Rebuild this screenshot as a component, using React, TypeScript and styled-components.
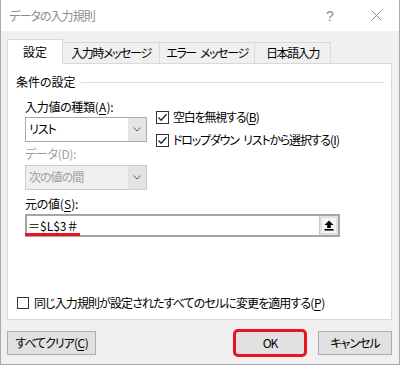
import styled, { createGlobalStyle } from 'styled-components';

const GlobalStyle = createGlobalStyle`
  html, body { margin: 0; padding: 0; background: #ffffff; }
  body {
    font-family: 'Noto Sans CJK JP', 'Noto Sans', sans-serif;
    font-size: 12px;
    font-feature-settings: 'palt';
    letter-spacing: -1px;
    word-spacing: 3px;
    color: #000;
  }
  * { box-sizing: border-box; }
`;

const Window = styled.div`
  width: 400px;
  height: 365px;
  border: 1px solid #a9a9a9;
  border-top: none;
  display: flex;
  flex-direction: column;
  background: #f0f0f0;
`;

const TitleBar = styled.div`
  height: 31px;
  background: #ffffff;
  display: flex;
  align-items: center;
  padding-left: 8px;
  color: #8c8c8c;
  line-height: 16px;
`;

const Title = styled.span`
  flex: 1;
  letter-spacing: -0.9px;
`;

const TitleIcon = styled.span`
  width: 46px;
  display: flex;
  justify-content: center;
  color: #8c8c8c;
  font-family: 'Liberation Sans', sans-serif;
  font-size: 14px;
  letter-spacing: 0;
`;

const Body = styled.div`
  flex: 1;
  padding: 8px 7px 0 6px;
  display: flex;
  flex-direction: column;
`;

const TabBar = styled.div`
  display: flex;
  align-items: flex-end;
  height: 24px;
`;

const Tab = styled.div<{ $w: number; $active?: boolean }>`
  width: ${(p) => p.$w}px;
  height: ${(p) => (p.$active ? 25 : 21)}px;
  margin-bottom: ${(p) => (p.$active ? -1 : 0)}px;
  margin-left: -1px;
  &:first-child { margin-left: 0; }
  border: 1px solid #d9d9d9;
  border-bottom: none;
  background: ${(p) => (p.$active ? '#ffffff' : '#f0f0f0')};
  position: relative;
  z-index: ${(p) => (p.$active ? 1 : 0)};
  display: flex;
  justify-content: center;
  align-items: ${(p) => (p.$active ? 'flex-start' : 'center')};
  padding-top: ${(p) => (p.$active ? 4 : 0)}px;
  line-height: 16px;
  letter-spacing: ${(p) => (p.$active ? 0 : -1.4)}px;
  white-space: nowrap;
`;

const Panel = styled.div`
  height: 257px;
  background: #ffffff;
  border: 1px solid #d9d9d9;
  padding: 10px 6px 8px 8px;
  display: flex;
  flex-direction: column;
`;

const GroupHeader = styled.div`
  display: flex;
  align-items: center;
  gap: 5px;
  height: 16px;
  line-height: 16px;
  letter-spacing: 0;
`;

const Rule = styled.div`
  flex: 1;
  height: 1px;
  background: #dcdcdc;
`;

const GroupBody = styled.div`
  padding-left: 9px;
  display: flex;
  flex-direction: column;
`;

const Columns = styled.div`
  display: flex;
  gap: 9px;
`;

const LeftCol = styled.div`
  width: 122px;
  display: flex;
  flex-direction: column;
`;

const RightCol = styled.div`
  padding-top: 19px;
  display: flex;
  flex-direction: column;
  gap: 7px;
`;

const Label = styled.div<{ $top: number; $disabled?: boolean }>`
  margin-top: ${(p) => p.$top}px;
  height: 16px;
  line-height: 16px;
  letter-spacing: -0.3px;
  color: ${(p) => (p.$disabled ? '#a0a0a0' : '#000')};
  white-space: nowrap;
`;

const Key = styled.span`
  text-decoration: underline;
  text-underline-offset: 2px;
  padding: 0 0.5px;
`;

const Select = styled.div<{ $top: number; $disabled?: boolean }>`
  margin-top: ${(p) => p.$top}px;
  height: 25px;
  display: flex;
  border: 1px solid ${(p) => (p.$disabled ? '#cccccc' : '#acacac')};
  background: ${(p) => (p.$disabled ? '#efefef' : '#ffffff')};
  color: ${(p) => (p.$disabled ? '#a0a0a0' : '#000')};
`;

const SelectValue = styled.div`
  flex: 1;
  padding-left: 3px;
  line-height: 22px;
`;

const DropButton = styled.div<{ $disabled?: boolean }>`
  width: 18px;
  background: ${(p) => (p.$disabled ? '#e3e3e3' : '#e5e5e5')};
  display: flex;
  align-items: center;
  justify-content: center;
`;

const CheckRow = styled.label`
  display: flex;
  align-items: center;
  gap: 4px;
  height: 16px;
  line-height: 16px;
  letter-spacing: -1.2px;
  white-space: nowrap;
`;

const Box = styled.div<{ $size: number }>`
  width: ${(p) => p.$size}px;
  height: ${(p) => p.$size}px;
  border: 1px solid #333333;
  background: #ffffff;
  display: flex;
  align-items: center;
  justify-content: center;
  flex-shrink: 0;
`;

const RefInput = styled.div`
  margin-top: 2px;
  width: 315px;
  height: 23px;
  border: 2px solid #a5a5a5;
  display: flex;
  background: #ffffff;
`;

const RefValue = styled.div`
  flex: 1;
  line-height: 19px;
  letter-spacing: 0;
  font-feature-settings: normal;
`;

const Marked = styled.span`
  position: relative;
  display: inline-block;
  padding-left: 1px;
  &::after {
    content: '';
    position: absolute;
    left: -2px;
    right: -1px;
    bottom: -1px;
    height: 3px;
    background: #e8141c;
  }
`;

const RefButton = styled.div`
  width: 19px;
  background: #e1e1e1;
  border-left: 1px solid #c8c8c8;
  padding: 2px;
  display: flex;
`;

const RefButtonFace = styled.div`
  flex: 1;
  background: #f5f5f5;
  display: flex;
  align-items: center;
  justify-content: center;
`;

const BottomCheck = styled(CheckRow)`
  margin-top: auto;
  margin-left: 1px;
  gap: 5px;
  letter-spacing: -0.9px;
`;

const Footer = styled.div`
  margin-top: 11px;
  display: flex;
  justify-content: space-between;
`;

const ButtonGroup = styled.div`
  display: flex;
  gap: 12px;
`;

const Button = styled.button<{ $w: number; $default?: boolean }>`
  position: relative;
  width: ${(p) => p.$w}px;
  height: 24px;
  padding: 0;
  border: 1px solid ${(p) => (p.$default ? '#0078d7' : '#adadad')};
  background: #e1e1e1;
  font-family: inherit;
  font-feature-settings: 'palt';
  font-size: 12px;
  letter-spacing: -1px;
  line-height: 16px;
  color: #000;
`;

const Highlight = styled.div`
  position: absolute;
  inset: -3px -2px -3px -2px;
  border: 3px solid #e8141c;
  border-radius: 5px;
  pointer-events: none;
`;

const Chevron = () => (
  <svg width="8" height="5" viewBox="0 0 8 5">
    <path d="M0.5 0.5 L4 4 L7.5 0.5" fill="none" stroke="#606060" strokeWidth="1" />
  </svg>
);

const Check = () => (
  <svg width="11" height="11" viewBox="0 0 11 11">
    <path d="M1.5 5.5 L4.2 8.3 L9.5 2.2" fill="none" stroke="#222" strokeWidth="1.3" />
  </svg>
);

const UploadIcon = () => (
  <svg width="10" height="11" viewBox="0 0 10 11">
    <path d="M5 0.5 L9.5 5 H6.8 V8 H3.2 V5 H0.5 Z" fill="#000" />
    <rect x="0.5" y="9" width="9" height="1.6" fill="#000" />
  </svg>
);

const CloseIcon = () => (
  <svg width="11" height="11" viewBox="0 0 11 11">
    <path d="M0.5 0.5 L10.5 10.5 M10.5 0.5 L0.5 10.5" stroke="#8c8c8c" strokeWidth="1" />
  </svg>
);

const tabs = [
  { name: '設定', w: 56 },
  { name: '入力時メッセージ', w: 98 },
  { name: 'エラー メッセージ', w: 96 },
  { name: '日本語入力', w: 77 },
];

const App = () => {
  return (
    <>
      <GlobalStyle />
      <Window>
        <TitleBar>
          <Title>データの入力規則</Title>
          <TitleIcon>?</TitleIcon>
          <TitleIcon>
            <CloseIcon />
          </TitleIcon>
        </TitleBar>
        <Body>
          <TabBar>
            {tabs.map((tab, idx) => (
              <Tab key={idx} $w={tab.w} $active={idx === 0}>
                {tab.name}
              </Tab>
            ))}
          </TabBar>
          <Panel>
            <GroupHeader>
              <span>条件の設定</span>
              <Rule />
            </GroupHeader>
            <GroupBody>
              <Columns>
                <LeftCol>
                  <Label $top={9}>
                    入力値の種類(<Key>A</Key>):
                  </Label>
                  <Select $top={2}>
                    <SelectValue>リスト</SelectValue>
                    <DropButton>
                      <Chevron />
                    </DropButton>
                  </Select>
                  <Label $top={4} $disabled>
                    データ(D):
                  </Label>
                  <Select $top={3} $disabled>
                    <SelectValue>次の値の間</SelectValue>
                    <DropButton $disabled>
                      <Chevron />
                    </DropButton>
                  </Select>
                </LeftCol>
                <RightCol>
                  <CheckRow>
                    <Box $size={13}>
                      <Check />
                    </Box>
                    <span>
                      空白を無視する(<Key>B</Key>)
                    </span>
                  </CheckRow>
                  <CheckRow>
                    <Box $size={13}>
                      <Check />
                    </Box>
                    <span>
                      ドロップダウン リストから選択する(<Key>I</Key>)
                    </span>
                  </CheckRow>
                </RightCol>
              </Columns>
              <Label $top={6}>
                元の値(<Key>S</Key>):
              </Label>
              <RefInput>
                <RefValue>
                  <Marked>＝$L$3＃</Marked>
                </RefValue>
                <RefButton>
                  <RefButtonFace>
                    <UploadIcon />
                  </RefButtonFace>
                </RefButton>
              </RefInput>
            </GroupBody>
            <BottomCheck>
              <Box $size={12} />
              <span>
                同じ入力規則が設定されたすべてのセルに変更を適用する(<Key>P</Key>)
              </span>
            </BottomCheck>
          </Panel>
          <Footer>
            <Button $w={89}>
              すべてクリア(<Key>C</Key>)
            </Button>
            <ButtonGroup>
              <Button $w={72} $default>
                OK
                <Highlight />
              </Button>
              <Button $w={74}>キャンセル</Button>
            </ButtonGroup>
          </Footer>
        </Body>
      </Window>
    </>
  );
};

export default App;
